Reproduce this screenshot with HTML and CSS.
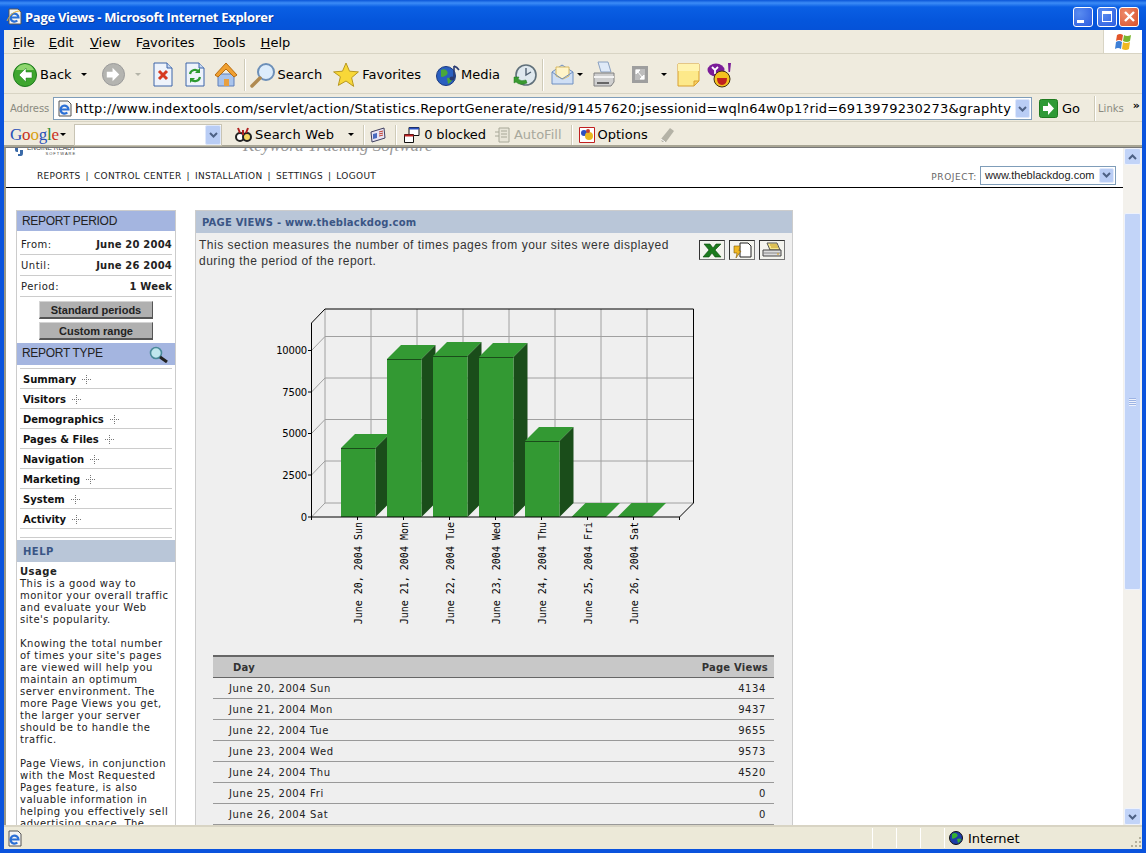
FILE: index.html
```html
<!DOCTYPE html>
<html>
<head>
    <title>Page Views - Microsoft Internet Explorer</title>
    <link rel="stylesheet" href="styles.css">
</head>
<body>
<div class="window">
    <div class="titlebar">
        <svg class="title-icon" width="17" height="17" viewBox="0 0 17 17"><path d="M3 1h9l3 3v12H3z" fill="#f4f4f4" stroke="#555"/><path d="M4.500 9.500h8a4 4 0 1 0-1.200 3" fill="none" stroke="#2a6fd6" stroke-width="2.200"/><path d="M1 13C4 6 9 3 14 3" fill="none" stroke="#e8b030" stroke-width="1"/></svg>
        <span class="title-text">Page Views - Microsoft Internet Explorer</span>
        <div class="win-buttons">
            <div class="win-btn win-btn-min"><span class="glyph-min"></span></div>
            <div class="win-btn"><span class="glyph-max"></span></div>
            <div class="win-btn win-close">
                <svg width="13" height="13" viewBox="0 0 13 13"><path d="M2 2l9 9M11 2l-9 9" stroke="#fff" stroke-width="2.4"/></svg>
            </div>
        </div>
    </div>

    <div class="menubar">
        <span class="menu-item m-file"><u>F</u>ile</span>
        <span class="menu-item m-edit"><u>E</u>dit</span>
        <span class="menu-item m-view"><u>V</u>iew</span>
        <span class="menu-item m-fav">F<u>a</u>vorites</span>
        <span class="menu-item m-tools"><u>T</u>ools</span>
        <span class="menu-item m-help"><u>H</u>elp</span>
        <div class="flag-box">
            <svg width="20" height="20" viewBox="0 0 20 20"><path d="M4 3q3-2 6 0l-1 6q-3-2-6 0z" fill="#e2552a"/><path d="M11 3q3 2 7 0l-1 6q-3 2-7 0z" fill="#7ab52e"/><path d="M3 10q3-2 6 0l-1 7q-3-2-6 0z" fill="#3c7fd6"/><path d="M10 10q3 2 7 0l-1 7q-3 2-7 0z" fill="#f0b820"/></svg>
        </div>
    </div>

    <div class="toolbar">
        <svg class="t-back" width="24" height="24" viewBox="0 0 24 24"><circle cx="12" cy="12" r="11.5" fill="#3fa62f" stroke="#1f7a1f"/><path d="M12 1a11 9 0 0 1 9 6H3a11 9 0 0 1 9-6z" fill="#8fd66f"/><path d="M13 5l-7 7 7 7v-4h6V9h-6z" fill="#fff" stroke="#1f7a1f" stroke-width=".5"/></svg>
        <span class="tool-text t-back-text">Back</span>
        <span class="arrow t-back-arrow"></span>
        <svg class="t-forward" width="23" height="23" viewBox="0 0 24 24"><circle cx="12" cy="12" r="11.5" fill="#b4b4b0" stroke="#999"/><path d="M11 5l7 7-7 7v-4H5V9h6z" fill="#fff"/></svg>
        <span class="arrow arrow-off t-forward-arrow"></span>
        <svg class="t-stop" width="20" height="25" viewBox="0 0 20 25"><path d="M1 1h13l5 5v18H1z" fill="#eef3fb" stroke="#3d65a8"/><path d="M14 1v5h5" fill="#c5d5ee" stroke="#3d65a8"/><path d="M6 9l8 8M14 9l-8 8" stroke="#d63a20" stroke-width="3"/></svg>
        <svg class="t-refresh" width="20" height="25" viewBox="0 0 20 25"><path d="M1 1h13l5 5v18H1z" fill="#eef3fb" stroke="#3d65a8"/><path d="M14 1v5h5" fill="#c5d5ee" stroke="#3d65a8"/><path d="M5 12a5 5 0 0 1 9-2" fill="none" stroke="#2c9a30" stroke-width="2.2"/><path d="M15 6v5h-5z" fill="#2c9a30"/><path d="M15 15a5 5 0 0 1-9 2" fill="none" stroke="#2c9a30" stroke-width="2.2"/><path d="M5 21v-5h5z" fill="#2c9a30"/></svg>
        <svg class="t-home" width="24" height="25" viewBox="0 0 24 25"><path d="M4 12v12h16V12z" fill="#a9c4ec" stroke="#5e7fb8"/><path d="M10 17h5v7h-5z" fill="#e8a040"/><path d="M1 13L12 1l11 12-3 2-8-8-8 8z" fill="#f0a030" stroke="#b86c10"/></svg>
        <span class="sep t-sep1"></span>
        <svg class="t-search" width="26" height="26" viewBox="0 0 26 26"><circle cx="16" cy="10" r="8" fill="#dcecfb" stroke="#6c8fb8" stroke-width="2"/><path d="M10 16l-8 8" stroke="#b08a50" stroke-width="3.5" stroke-linecap="round"/></svg>
        <span class="tool-text t-search-text">Search</span>
        <svg class="t-star" width="26" height="26" viewBox="0 0 26 26"><path d="M13 1l3.500 8.200 8.900.7-6.800 5.800 2.100 8.700L13 19l-7.700 4.400 2.100-8.700L.6 9.900l8.900-.7z" fill="#f8d838" stroke="#b89820"/></svg>
        <span class="tool-text t-star-text">Favorites</span>
        <svg class="t-media" width="24" height="24" viewBox="0 0 24 24"><circle cx="10" cy="13" r="9.500" fill="#2a5fc0" stroke="#1a3a80"/><path d="M5 7q4-2 6 1t-2 5-4 0zM11 15q4-1 5 1t-4 5z" fill="#4aa83a"/><path d="M18 3v12" stroke="#2a3a70" stroke-width="1.600"/><path d="M18 3q3 1 5 4" fill="none" stroke="#2a3a70" stroke-width="1.600"/><ellipse cx="16" cy="15.500" rx="2.500" ry="2" fill="#2a3a70"/></svg>
        <span class="tool-text t-media-text">Media</span>
        <svg class="t-history" width="24" height="24" viewBox="0 0 24 24"><circle cx="13" cy="12" r="10" fill="#dfe8ee" stroke="#60707a" stroke-width="1.600"/><path d="M13 5v7l5-3" fill="none" stroke="#506070" stroke-width="1.400"/><path d="M1 14h5l-1 2q3 3 8 1l1 3q-7 3-11-1l-2 1z" fill="#3a9a30" stroke="#1f7a1f" stroke-width=".5"/></svg>
        <span class="sep t-sep2"></span>
        <svg class="t-mail" width="23" height="23" viewBox="0 0 23 23"><path d="M1 9l10-7 11 7v12H1z" fill="#cfdff5" stroke="#6f8fc0"/><path d="M5 4h13v9l-6 3-7-3z" fill="#fff4c8" stroke="#d8b860"/><path d="M1 9l10 7 11-7" fill="none" stroke="#6f8fc0"/></svg>
        <span class="arrow t-mail-arrow"></span>
        <svg class="t-print" width="24" height="27" viewBox="0 0 24 27"><path d="M6 1h10l3 10H9z" fill="#dfeaf8" stroke="#8aa0c0"/><path d="M2 12h20v9l-3 4H2z" fill="#cfcfcf" stroke="#808080"/><path d="M2 16h20" stroke="#f2f2f2" stroke-width="2"/><path d="M5 22h12" stroke="#666" stroke-width="2"/></svg>
        <svg class="t-resize" width="16" height="17" viewBox="0 0 16 17"><path d="M0 0h16v17H0z" fill="#9e9e9e"/><path d="M3 3h10v11H3z" fill="#bdbdbd"/><path d="M4 4h4L4 8zM12 13H8l4-4zM5 5l6 7" fill="#fff" stroke="#fff"/></svg>
        <span class="arrow t-resize-arrow"></span>
        <svg class="t-note" width="23" height="24" viewBox="0 0 23 24"><path d="M1 1h21v17l-5 5H1z" fill="#fde98a" stroke="#d8a030"/><path d="M1 1h21v7H1z" fill="#fff3b0"/><path d="M17 23v-5h5z" fill="#f8d060" stroke="#d8a030"/></svg>
        <svg class="t-yahoo" width="26" height="26" viewBox="0 0 26 26"><ellipse cx="9" cy="8" rx="8.500" ry="6.500" fill="#7b1c98"/><path d="M5 5l3 3 3-3M8 8v4" fill="none" stroke="#fff" stroke-width="1.800"/><path d="M21 1h3l-1 9h-1.500z" fill="#7b1c98"/><circle cx="15" cy="17" r="8" fill="#f4c020" stroke="#403010"/><path d="M10 16h10q0 7-5 7t-5-7z" fill="#c02020"/></svg>
    </div>

    <div class="addressbar">
        <span class="addr-label">Address</span>
        <div class="addr-field">
            <svg width="17" height="17" viewBox="0 0 17 17"><path d="M3 1h9l3 3v12H3z" fill="#f4f4f4" stroke="#555"/><path d="M4.500 9.500h8a4 4 0 1 0-1.200 3" fill="none" stroke="#2a6fd6" stroke-width="2.200"/></svg>
            <span class="addr-url">http://www.indextools.com/servlet/action/Statistics.ReportGenerate/resid/91457620;jsessionid=wqln64w0p1?rid=6913979230273&amp;graphty</span>
            <span class="combo-btn"><svg width="9" height="6" viewBox="0 0 9 6"><path d="M1 1l3.500 3.500L8 1" fill="none" stroke="#4d6185" stroke-width="2"/></svg></span>
        </div>
        <svg class="go-icon" width="19" height="19" viewBox="0 0 19 19"><rect x=".5" y=".5" width="18" height="18" rx="2" fill="#2f9a36" stroke="#1f7a1f"/><path d="M9 3l6 6.500-6 6.500v-4H4V7h5z" fill="#fff"/></svg>
        <span class="tool-text go-text">Go</span>
        <span class="links-sep"></span>
        <span class="links-text">Links</span>
        <span class="links-more">&raquo;</span>
    </div>

    <div class="googlebar">
        <span class="g-logo"><span class="g-b">G</span><span class="g-r">o</span><span class="g-y">o</span><span class="g-b">g</span><span class="g-g">l</span><span class="g-r">e</span></span>
        <span class="arrow g-logo-arrow"></span>
        <div class="g-input"><span class="combo-btn combo-tall"><svg width="9" height="6" viewBox="0 0 9 6"><path d="M1 1l3.500 3.500L8 1" fill="none" stroke="#4d6185" stroke-width="2"/></svg></span></div>
        <svg class="g-binoc" width="17" height="17" viewBox="0 0 17 17"><circle cx="5" cy="11" r="4" fill="#fff" stroke="#222" stroke-width="2"/><circle cx="12" cy="11" r="4" fill="#f8d860" stroke="#222" stroke-width="2"/><path d="M3 2l2 5M8 4v5M13 2l-2 5" stroke="#b02020" stroke-width="2"/></svg>
        <span class="tool-text g-search">Search Web</span>
        <span class="arrow g-search-arrow"></span>
        <span class="sep-short g-sep1"></span>
        <svg class="g-news" width="16" height="16" viewBox="0 0 16 16"><path d="M1 5l13-4 1 10-13 4z" fill="#e8e4f4" stroke="#404060"/><path d="M3 7l4-1v5l-4 1z" fill="#4a6ac0"/><path d="M9 5l4-1M9 7l4-1M9 9l4-1" stroke="#c04030"/></svg>
        <span class="sep-short g-sep2"></span>
        <svg class="g-popup" width="16" height="16" viewBox="0 0 16 16"><path d="M5 .5h10v8H5z" fill="#fff" stroke="#111"/><path d="M5 .5h10v2H5z" fill="#2a50c0"/><path d="M.5 7.500h9v8h-9z" fill="#fff" stroke="#111"/><path d="M.5 7.500h9v2h-9z" fill="#c02020"/></svg>
        <span class="tool-text g-blocked">0 blocked</span>
        <svg class="g-fill" width="16" height="16" viewBox="0 0 16 16"><path d="M4 1h10v14H4z" fill="#e8e5d8" stroke="#a8a898"/><path d="M0 5h4M0 9h4M6 4h6M6 7h6M6 10h6" stroke="#a8a898"/></svg>
        <span class="tool-text g-autofill">AutoFill</span>
        <span class="sep-short g-sep3"></span>
        <svg class="g-options" width="16" height="16" viewBox="0 0 16 16"><path d="M.5.5h15v15H.5z" fill="#fff" stroke="#c02020"/><circle cx="5" cy="6" r="3" fill="#2a50c0"/><circle cx="10" cy="9" r="4" fill="#e8b820"/><circle cx="9" cy="4" r="2" fill="#c04030"/></svg>
        <span class="tool-text g-options-text">Options</span>
        <svg class="g-eraser" width="15" height="16" viewBox="0 0 15 16"><path d="M1 12L10 1l4 3-8 11H2z" fill="#b4b2a6"/><path d="M1 12l4 3" stroke="#fff"/></svg>
    </div>

    <div class="page-area">
        <div class="page">
            <div class="site-head">
                <div class="logo-row">
                    <div class="logo">
                        <svg width="10" height="16" viewBox="0 0 10 16"><path d="M8 1H3Q1 1 1 4v4q0 2 2 2h1V4h4z" fill="#3a6aa8"/><path d="M4 14h3q2 0 2-3V8H6v4H4z" fill="#3a6aa8"/></svg>
                        <div class="logo-text">ENGINE READY<small>SOFTWARE</small></div>
                    </div>
                    <span class="tagline">Keyword Tracking Software</span>
                </div>
                <div class="nav-row">
                    <div class="site-nav">REPORTS<i>|</i>CONTROL CENTER<i>|</i>INSTALLATION<i>|</i>SETTINGS<i>|</i>LOGOUT</div>
                    <div class="project">
                        <span class="project-label">PROJECT:</span>
                        <div class="project-select">www.theblackdog.com<span class="combo-btn combo-small"><svg width="9" height="6" viewBox="0 0 9 6"><path d="M1 1l3.500 3.500L8 1" fill="none" stroke="#4d6185" stroke-width="2"/></svg></span></div>
                    </div>
                </div>
            </div>

            <div class="columns">
                <div class="sidebar">
                    <div class="side-head">REPORT PERIOD</div>
                    <div class="period-rows">
                        <div class="period-row"><span>From:</span><b>June 20 2004</b></div>
                        <div class="period-row"><span>Until:</span><b>June 26 2004</b></div>
                        <div class="period-row"><span>Period:</span><b>1 Week</b></div>
                    </div>
                    <div class="side-btn side-btn-first">Standard periods</div>
                    <div class="side-btn">Custom range</div>
                    <div class="side-head side-head-type">REPORT TYPE
                        <svg width="20" height="17" viewBox="0 0 20 17"><circle cx="7" cy="7" r="5.500" fill="#bfe6ee" stroke="#4a8a9a" stroke-width="1.600"/><path d="M11 11l7 5" stroke="#222" stroke-width="3"/></svg>
                    </div>
                    <ul class="type-list">
                        <li>Summary<span class="plus"></span></li>
                        <li>Visitors<span class="plus"></span></li>
                        <li>Demographics<span class="plus"></span></li>
                        <li>Pages &amp; Files<span class="plus"></span></li>
                        <li>Navigation<span class="plus"></span></li>
                        <li>Marketing<span class="plus"></span></li>
                        <li>System<span class="plus"></span></li>
                        <li>Activity<span class="plus"></span></li>
                    </ul>
                    <div class="type-end"></div>
                    <div class="help-head">HELP</div>
                    <div class="help-body">
                        <b>Usage</b><br>
                        This is a good way to<br>
                        monitor your overall traffic<br>
                        and evaluate your Web<br>
                        site's popularity.<br>
                        <br>
                        Knowing the total number<br>
                        of times your site's pages<br>
                        are viewed will help you<br>
                        maintain an optimum<br>
                        server environment. The<br>
                        more Page Views you get,<br>
                        the larger your server<br>
                        should be to handle the<br>
                        traffic.<br>
                        <br>
                        Page Views, in conjunction<br>
                        with the Most Requested<br>
                        Pages feature, is also<br>
                        valuable information in<br>
                        helping you effectively sell<br>
                        advertising space. The
                    </div>
                </div>

                <div class="report">
                    <div class="report-head">PAGE VIEWS - www.theblackdog.com</div>
                    <div class="report-intro">
                        <p>This section measures the number of times pages from your sites were displayed during the period of the report.</p>
                        <div class="export-btns">
                            <span class="export-btn"><svg width="20" height="15" viewBox="0 0 20 15"><path d="M2 1h6l3 4 3-4h5l-6 6 6 7h-6l-3-4-3 4H1l6-7z" fill="#1c7a1c" stroke="#0c4a0c" stroke-width=".6"/></svg></span>
                            <span class="export-btn"><svg width="20" height="16" viewBox="0 0 20 16"><path d="M8 1h8l3 3v11H8z" fill="#fff" stroke="#222"/><path d="M2 4h6l-1 5h2l-5 7 1-5H2z" fill="#f0b820" stroke="#805c08" stroke-width=".6"/></svg></span>
                            <span class="export-btn"><svg width="22" height="16" viewBox="0 0 22 16"><path d="M6 1h10l3 7H9z" fill="#f6e68a" stroke="#555"/><path d="M9 3h7M10 5h7" stroke="#c09820"/><path d="M2 8h18v6H2z" fill="#ddd" stroke="#444"/><path d="M2 11h18" stroke="#888"/><path d="M16 12h2" stroke="#d8a020"/></svg></span>
                        </div>
                    </div>

                    <svg class="chart" width="450" height="330" viewBox="260 300 450 330">
                        <g class="grid">
                            <path d="M325 309V503M371 309V503M417 309V503M463 309V503M509 309V503M555 309V503M601 309V503M647 309V503"/>
                            <path d="M325 336.500H693M325 378H693M325 419.500H693M325 461H693M325 503H693"/>
                            <path d="M311.500 350.500L325 336.500M311.500 392L325 378M311.500 433.500L325 419.500M311.500 475L325 461M311.500 517L325 503"/>
                        </g>
                        <g class="bar">
                            <path class="bar-top" d="M341 448l14-14h34.500l-14 14z"/><path class="bar-side" d="M375.500 448l14-14v69l-14 14z"/><path class="bar-front" d="M341 448h34.500v69H341z"/><path class="bar-line" d="M341 448.500h34.500"/>
                            <path class="bar-top" d="M387 359l14-14h34.500l-14 14z"/><path class="bar-side" d="M421.500 359l14-14v158l-14 14z"/><path class="bar-front" d="M387 359h34.500v158H387z"/><path class="bar-line" d="M387 359.500h34.500"/>
                            <path class="bar-top" d="M433 356l14-14h34.500l-14 14z"/><path class="bar-side" d="M467.500 356l14-14v161l-14 14z"/><path class="bar-front" d="M433 356h34.500v161H433z"/><path class="bar-line" d="M433 356.500h34.500"/>
                            <path class="bar-top" d="M479 357l14-14h34.500l-14 14z"/><path class="bar-side" d="M513.500 357l14-14v160l-14 14z"/><path class="bar-front" d="M479 357h34.500v160H479z"/><path class="bar-line" d="M479 357.500h34.500"/>
                            <path class="bar-top" d="M525 441l14-14h34.500l-14 14z"/><path class="bar-side" d="M559.500 441l14-14v76l-14 14z"/><path class="bar-front" d="M525 441h34.500v76H525z"/><path class="bar-line" d="M525 441.500h34.500"/>
                            <path class="bar-top" d="M571.500 517l14-14h34.500l-14 14z"/>
                            <path class="bar-top" d="M617.500 517l14-14h34.500l-14 14z"/>
                        </g>
                        <g class="axes">
                            <path d="M311.500 517V323L325 309H693.500V503L679.500 517H311.500"/>
                            <path d="M308 350.500h3.500M308 392h3.500M308 433.500h3.500M308 475h3.500M308 517h3.500M311.500 517v3M357.500 517v3M403.500 517v3M449.500 517v3M495.500 517v3M541.500 517v3M587.500 517v3M633.500 517v3M679.500 517v3"/>
                        </g>
                        <g class="ticks">
                            <text x="307" y="354">10000</text>
                            <text x="307" y="396">7500</text>
                            <text x="307" y="437">5000</text>
                            <text x="307" y="479">2500</text>
                            <text x="307" y="521">0</text>
                        </g>
                        <g class="days">
                            <text transform="rotate(-90 362 522)" x="362" y="522">June 20, 2004 Sun</text>
                            <text transform="rotate(-90 408 522)" x="408" y="522">June 21, 2004 Mon</text>
                            <text transform="rotate(-90 454 522)" x="454" y="522">June 22, 2004 Tue</text>
                            <text transform="rotate(-90 500 522)" x="500" y="522">June 23, 2004 Wed</text>
                            <text transform="rotate(-90 546 522)" x="546" y="522">June 24, 2004 Thu</text>
                            <text transform="rotate(-90 592 522)" x="592" y="522">June 25, 2004 Fri</text>
                            <text transform="rotate(-90 638 522)" x="638" y="522">June 26, 2004 Sat</text>
                        </g>
                    </svg>

                    <table class="views">
                        <thead><tr><th class="day-head">Day</th><th class="num-head">Page Views</th></tr></thead>
                        <tbody>
                            <tr><td>June 20, 2004 Sun</td><td class="num">4134</td></tr>
                            <tr><td>June 21, 2004 Mon</td><td class="num">9437</td></tr>
                            <tr><td>June 22, 2004 Tue</td><td class="num">9655</td></tr>
                            <tr><td>June 23, 2004 Wed</td><td class="num">9573</td></tr>
                            <tr><td>June 24, 2004 Thu</td><td class="num">4520</td></tr>
                            <tr><td>June 25, 2004 Fri</td><td class="num">0</td></tr>
                            <tr><td>June 26, 2004 Sat</td><td class="num">0</td></tr>
                        </tbody>
                    </table>
                </div>
            </div>
        </div>

        <div class="scrollbar">
            <div class="scroll-btn"><svg width="9" height="6" viewBox="0 0 9 6"><path d="M1 5l3.500-3.500L8 5" fill="none" stroke="#4d6185" stroke-width="2"/></svg></div>
            <div class="scroll-gap-top"></div>
            <div class="scroll-thumb"><span class="thumb-grip"></span></div>
            <div class="scroll-gap-bottom"></div>
            <div class="scroll-btn"><svg width="9" height="6" viewBox="0 0 9 6"><path d="M1 1l3.500 3.500L8 1" fill="none" stroke="#4d6185" stroke-width="2"/></svg></div>
        </div>
    </div>

    <div class="statusbar">
        <svg class="status-ie" width="17" height="17" viewBox="0 0 17 17"><path d="M3 1h9l3 3v12H3z" fill="#f4f4f4" stroke="#555"/><path d="M4.500 9.500h8a4 4 0 1 0-1.200 3" fill="none" stroke="#2a6fd6" stroke-width="2.200"/></svg>
        <span class="status-cell status-cell-first"></span>
        <span class="status-cell"></span>
        <span class="status-cell"></span>
        <span class="status-cell status-last"></span>
        <svg class="status-globe" width="14" height="14" viewBox="0 0 14 14"><circle cx="7" cy="7" r="6.500" fill="#1c3ca8" stroke="#111"/><path d="M3 3q3-2 5 0t-2 4-3-1zM8 8q3-1 4 0t-3 4z" fill="#35b030"/></svg>
        <span class="status-zone">Internet</span>
        <svg class="status-grip" width="12" height="12" viewBox="0 0 12 12"><path d="M9 1h2v2H9zM5 5h2v2H5zM9 5h2v2H9zM1 9h2v2H1zM5 9h2v2H5zM9 9h2v2H9z" fill="#b4b09c"/></svg>
    </div>
</div>
</body>
</html>
```

FILE: styles.css
```css
html, body {
    margin: 0;
    padding: 0;
    height: 100%;
    overflow: hidden;
    background: #0a53dd;
}

.window {
    width: 1146px;
    height: 853px;
    display: flex;
    flex-direction: column;
    box-sizing: border-box;
    padding: 0 4px 4px;
    background: #0a53dd;
    font-family: "DejaVu Sans", sans-serif;
    color: #000;
}

/* title bar */
.titlebar {
    height: 30px;
    box-sizing: border-box;
    margin: 0 -4px;
    padding: 4px 7px 0 6px;
    display: flex;
    align-items: center;
    flex: none;
    background: linear-gradient(#0a55d8 0, #3c8cf6 3px, #0a5fe4 7px, #0556dc 20px, #0552d8 30px);
}

.title-icon {
    margin-right: 2px;
    margin-top: -2px;
}

.title-text {
    color: #fff;
    font: bold 13px "Open Sans", sans-serif;
    letter-spacing: -.3px;
    text-shadow: 1px 1px 0 #0a3a9c;
}

.win-buttons {
    margin-left: auto;
    display: flex;
    gap: 2px;
    margin-top: -1px;
}

.win-btn {
    width: 20px;
    height: 20px;
    box-sizing: border-box;
    border: 1px solid #fff;
    border-radius: 3px;
    background: radial-gradient(circle at 30% 30%, #5a8cf0, #2a5ce0);
    display: flex;
    align-items: center;
    justify-content: center;
}

.win-btn-min { margin-right: 2px; }

.win-close {
    background: radial-gradient(circle at 30% 30%, #ee8a6a, #d8502a);
}

.glyph-min {
    width: 7px;
    height: 3px;
    background: #fff;
    margin: 9px 6px 0 0;
}

.glyph-max {
    width: 8px;
    height: 7px;
    border: 1px solid #fff;
    border-top-width: 3px;
}

/* menu */
.menubar {
    height: 24px;
    flex: none;
    display: flex;
    align-items: center;
    box-sizing: border-box;
    padding-top: 2px;
    background: #efebde;
    border-bottom: 1px solid #d8d4c4;
    font-size: 13px;
}

.menu-item { white-space: nowrap; }
.m-file { margin-left: 9px; }
.m-edit { margin-left: 14px; }
.m-view { margin-left: 16px; }
.m-fav { margin-left: 15px; }
.m-tools { margin-left: 19px; }
.m-help { margin-left: 15px; }

.flag-box {
    margin-left: auto;
    margin-top: -2px;
    width: 39px;
    height: 23px;
    background: #fff;
    border-left: 1px solid #d8d4c4;
    box-sizing: border-box;
    display: flex;
    align-items: center;
    justify-content: center;
}

/* main toolbar */
.toolbar {
    height: 40px;
    flex: none;
    display: flex;
    align-items: center;
    box-sizing: border-box;
    padding-top: 2px;
    background: #efebde;
    border-bottom: 1px solid #d8d4c4;
}

.toolbar svg { flex: none; }

.tool-text {
    font-size: 13px;
    white-space: nowrap;
}

.arrow {
    flex: none;
    width: 0;
    height: 0;
    border-left: 3px solid transparent;
    border-right: 3px solid transparent;
    border-top: 3px solid #000;
}

.arrow-off { border-top-color: #b4b4a8; }

.sep {
    flex: none;
    width: 1px;
    height: 32px;
    background: #cfcbb8;
    border-right: 1px solid #fff;
}

.t-back { margin-left: 9px; }
.t-back-text { margin-left: 3px; }
.t-back-arrow { margin-left: 9px; }
.t-forward { margin-left: 15px; }
.t-forward-arrow { margin-left: 10px; }
.t-stop { margin-left: 12px; }
.t-refresh { margin-left: 12px; }
.t-home { margin-left: 9px; }
.t-sep1 { margin-left: 6px; }
.t-search { margin-left: 4px; }
.t-search-text { margin-left: 2px; }
.t-star { margin-left: 11px; }
.t-star-text { margin-left: 3px; }
.t-media { margin-left: 15px; }
.t-media-text { margin-left: 1px; }
.t-history { margin-left: 13px; }
.t-sep2 { margin-left: 5px; }
.t-mail { margin-left: 7px; }
.t-mail-arrow { margin-left: 3px; }
.t-print { margin-left: 9px; }
.t-resize { margin-left: 16px; }
.t-resize-arrow { margin-left: 13px; }
.t-note { margin-left: 10px; }
.t-yahoo { margin-left: 7px; }

/* address bar */
.addressbar {
    height: 28px;
    flex: none;
    display: flex;
    align-items: center;
    box-sizing: border-box;
    padding-top: 2px;
    background: #efebde;
    border-bottom: 1px solid #d8d4c4;
}

.addr-label {
    margin-left: 6px;
    width: 43px;
    flex: none;
    font-size: 10px;
    letter-spacing: -.1px;
    color: #8a8a80;
}

.addr-field {
    width: 979px;
    height: 23px;
    flex: none;
    box-sizing: border-box;
    border: 1px solid #7f9db9;
    background: #fff;
    display: flex;
    align-items: center;
    padding-left: 2px;
    overflow: hidden;
}

.addr-field svg { flex: none; }

.addr-url {
    font-size: 13px;
    margin-left: 2px;
    white-space: nowrap;
    overflow: hidden;
    flex: 1;
    letter-spacing: .2px;
}

.combo-btn {
    flex: none;
    width: 15px;
    height: 19px;
    margin: 0 1px;
    border-radius: 2px;
    background: #b9cdf5;
    border: 1px solid #dfe8fb;
    box-sizing: border-box;
    display: flex;
    align-items: center;
    justify-content: center;
}

.go-icon { margin-left: 7px; flex: none; }
.go-text { margin-left: 4px; }

.links-sep {
    width: 1px;
    height: 25px;
    margin-left: 14px;
    background: #cfcbb8;
    border-right: 1px solid #fff;
}

.links-text {
    margin-left: 2px;
    font-size: 10px;
    color: #8a8a80;
}

.links-more {
    margin-left: 9px;
    margin-top: -6px;
    font-size: 11px;
    font-weight: bold;
}

/* google bar */
.googlebar {
    height: 25px;
    flex: none;
    display: flex;
    align-items: center;
    box-sizing: border-box;
    padding-top: 2px;
    background: #efebde;
    border-bottom: 2px solid #a8a594;
}

.googlebar svg { flex: none; }

.g-logo {
    margin-left: 6px;
    font: 17px "Liberation Serif", serif;
    letter-spacing: -.2px;
    width: 50px;
}

.g-b { color: #2a50b8; }
.g-r { color: #c8301c; }
.g-y { color: #d8a010; }
.g-g { color: #2c8a30; }

.g-logo-arrow { margin-left: 0; }

.g-input {
    margin-left: 8px;
    width: 148px;
    height: 22px;
    flex: none;
    box-sizing: border-box;
    background: #fff;
    border: 1px solid #c8c4b4;
    display: flex;
    justify-content: flex-end;
}

.combo-tall {
    height: 20px;
    margin: 0;
    width: 16px;
}

.g-binoc { margin-left: 13px; }
.g-search { margin-left: 3px; letter-spacing: .2px; }
.g-search-arrow { margin-left: 14px; }

.sep-short {
    flex: none;
    width: 1px;
    height: 20px;
    background: #cfcbb8;
    border-right: 1px solid #fff;
}

.g-sep1 { margin-left: 9px; }
.g-news { margin-left: 5px; }
.g-sep2 { margin-left: 9px; }
.g-popup { margin-left: 7px; }
.g-blocked { margin-left: 4px; letter-spacing: -.1px; }
.g-fill { margin-left: 9px; }
.g-autofill { margin-left: 3px; color: #a8a89c; }
.g-sep3 { margin-left: 9px; }
.g-options { margin-left: 6px; }
.g-options-text { margin-left: 3px; }
.g-eraser { margin-left: 12px; }

/* page */
.page-area {
    flex: 1;
    min-height: 0;
    display: flex;
    border-left: 2px solid #9a9788;
    border-top: 1px solid #777;
}

.page {
    flex: 1;
    min-width: 0;
    overflow: hidden;
    background: #fff;
    font-size: 10px;
    letter-spacing: .5px;
    color: #222;
}

.site-head {
    height: 39px;
    border-bottom: 1px solid #000;
    display: flex;
    flex-direction: column;
}

.logo-row {
    height: 15px;
    margin-top: -6px;
    flex: none;
    display: flex;
    align-items: flex-start;
    padding-left: 8px;
}

.logo {
    display: flex;
    align-items: flex-start;
    width: 229px;
    flex: none;
}

.logo-text {
    margin-left: 3px;
    font: 6.500px "Liberation Sans", sans-serif;
    line-height: 6px;
    padding-top: 3px;
    color: #444;
    letter-spacing: 0;
}

.logo-text small {
    display: block;
    text-align: right;
    font-size: 4px;
    letter-spacing: 1px;
}

.tagline {
    font: italic 17px "Liberation Serif", serif;
    color: #999;
    letter-spacing: 0;
    margin-top: -6px;
}

.nav-row {
    flex: 1;
    display: flex;
    align-items: center;
    justify-content: space-between;
    padding: 0 7px 0 31px;
}

.site-nav {
    font: 9px "DejaVu Sans", sans-serif;
    letter-spacing: .33px;
    margin-top: 8px;
}

.site-nav i {
    font-style: normal;
    margin: 0 5px;
}

.project {
    display: flex;
    align-items: center;
    margin-top: 6px;
}

.project-label {
    font: 9px "DejaVu Sans", sans-serif;
    letter-spacing: .6px;
    color: #666;
    margin-right: 3px;
    margin-top: 3px;
}

.project-select {
    width: 136px;
    height: 19px;
    box-sizing: border-box;
    border: 1px solid #7f9db9;
    display: flex;
    align-items: center;
    justify-content: space-between;
    padding-left: 4px;
    font: 11px "Liberation Sans", sans-serif;
    letter-spacing: 0;
}

.combo-small {
    height: 15px;
    width: 15px;
}

.columns {
    display: flex;
    align-items: flex-start;
    padding: 22px 0 0 10px;
}

/* left column */
.sidebar {
    width: 160px;
    flex: none;
    box-sizing: border-box;
    border: 1px solid #cccccc;
    border-bottom: 0;
}

.side-head {
    height: 20px;
    background: #a4b5e0;
    font: 12px/20px "Liberation Sans", sans-serif;
    letter-spacing: -.3px;
    color: #222;
    padding-left: 5px;
}

.side-head-type {
    height: 22px;
    margin-top: 3px;
    line-height: 20px;
    display: flex;
    justify-content: space-between;
    padding-right: 6px;
}

.side-head-type svg { margin-top: 3px; }

.period-rows {
    margin: 3px 3px 0;
}

.period-row {
    height: 21px;
    box-sizing: border-box;
    border-bottom: 1px solid #ccc;
    display: flex;
    justify-content: space-between;
    align-items: center;
    padding: 1px 0 0 1px;
    font-size: 10px;
}

.period-row b { letter-spacing: .2px; }

.side-btn {
    width: 114px;
    height: 18px;
    margin: 3px auto 0;
    box-sizing: border-box;
    background: #b0b0b0;
    border-top: 1px solid #d4d4d4;
    border-left: 1px solid #d4d4d4;
    border-right: 1px solid #555;
    border-bottom: 2px solid #555;
    text-align: center;
    font: bold 11px/16px "Liberation Sans", sans-serif;
    letter-spacing: 0;
    color: #222;
}

.side-btn-first { margin-top: 4px; }

.type-list {
    list-style: none;
    margin: 3px 3px 0;
    padding: 0;
    border-top: 1px solid #ccc;
}

.type-list li {
    height: 20px;
    box-sizing: border-box;
    border-bottom: 1px solid #ccc;
    font-weight: bold;
    font-size: 10px;
    letter-spacing: 0;
    padding: 2px 0 0 3px;
    color: #111;
    display: flex;
    align-items: center;
}

.plus {
    width: 9px;
    height: 9px;
    margin-left: 6px;
    background:
        repeating-linear-gradient(90deg, #777 0 1px, transparent 1px 2px) center / 9px 1px no-repeat,
        repeating-linear-gradient(0deg, #777 0 1px, transparent 1px 2px) center / 1px 9px no-repeat;
}

.type-end {
    margin: 8px 3px 0;
    border-top: 1px solid #ccc;
}

.help-head {
    height: 22px;
    margin-top: 2px;
    background: #b9c6d8;
    color: #3a5585;
    font: bold 10px/24px "DejaVu Sans", sans-serif;
    letter-spacing: .5px;
    padding-left: 6px;
}

.help-body {
    padding: 4px 3px 0;
    font-size: 10px;
    line-height: 12px;
    color: #222;
}

/* report panel */
.report {
    width: 598px;
    flex: none;
    margin-left: 19px;
    box-sizing: border-box;
    background: #efefef;
    border: 1px solid #cccccc;
    border-top-width: 1px;
}

.report-head {
    height: 22px;
    background: #b9c6d8;
    color: #3a5585;
    font: bold 10px/24px "DejaVu Sans", sans-serif;
    letter-spacing: .2px;
    padding-left: 6px;
}

.report-intro {
    display: flex;
    justify-content: space-between;
    padding: 4px 7px 0 3px;
    height: 36px;
}

.report-intro p {
    margin: 0;
    width: 480px;
    font: 12px/16px "Liberation Sans", sans-serif;
    letter-spacing: .5px;
    color: #333;
}

.export-btns {
    display: flex;
    gap: 4px;
    margin-top: 3px;
}

.export-btn {
    width: 26px;
    height: 20px;
    box-sizing: border-box;
    border: 1px solid #333;
    border-right-color: #777;
    border-bottom-color: #777;
    background: #f4f4ee;
    display: flex;
    align-items: center;
    justify-content: center;
}

.chart {
    display: block;
    margin: 27px 0 0 64px;
}

.grid path {
    fill: none;
    stroke: #a0a0a0;
    stroke-width: 1;
}

.bar-top, .bar-front { fill: #339933; }
.bar-side { fill: #1a4d1a; }
.bar-line { stroke: #1a4d1a; fill: none; }

.axes path {
    fill: none;
    stroke: #000;
    stroke-width: 1;
}

.ticks text {
    font: 10px "DejaVu Sans", sans-serif;
    letter-spacing: -.2px;
    fill: #000;
    text-anchor: end;
}

.days text {
    font: 10px "DejaVu Sans Mono", monospace;
    letter-spacing: 0;
    fill: #000;
    text-anchor: end;
}

.views {
    width: 561px;
    margin: 25px 0 0 17px;
    border-collapse: collapse;
    font-size: 10px;
    letter-spacing: .6px;
    color: #222;
}

.views th {
    height: 20px;
    padding: 0;
    background: #c8c8c8;
    border-top: 2px solid #666;
    border-bottom: 1px solid #666;
    color: #333;
    letter-spacing: .2px;
}

.day-head {
    text-align: left;
    padding-left: 20px !important;
}

.num-head {
    text-align: right;
    padding-right: 6px !important;
}

.views td {
    height: 20px;
    padding: 0 0 0 16px;
    border-bottom: 1px solid #999;
}

.views td.num {
    text-align: right;
    padding: 0 8px 0 0;
}

/* scrollbar */
.scrollbar {
    width: 19px;
    flex: none;
    display: flex;
    flex-direction: column;
    background: #f3f1ec;
}

.scroll-btn {
    height: 17px;
    flex: none;
    box-sizing: border-box;
    margin: 0 1px;
    border: 1px solid #eef2fc;
    border-radius: 2px;
    background: #c2d4f8;
    display: flex;
    align-items: center;
    justify-content: center;
}

.scroll-gap-top { height: 48px; flex: none; }
.scroll-gap-bottom { flex: 1; }

.scroll-thumb {
    height: 377px;
    flex: none;
    box-sizing: border-box;
    margin: 0 1px;
    border: 1px solid #eef2fc;
    border-radius: 2px;
    background: #c2d4f8;
    display: flex;
    align-items: center;
    justify-content: center;
}

.thumb-grip {
    width: 7px;
    height: 8px;
    background: repeating-linear-gradient(0deg, #eef2fc 0 1px, #9db4e4 1px 2px);
}

/* status bar */
.statusbar {
    height: 24px;
    flex: none;
    display: flex;
    align-items: center;
    box-sizing: border-box;
    background: #ece9d8;
    border-top: 2px solid #d8d4c4;
}

.status-ie { margin-left: 2px; flex: none; }

.status-cell {
    width: 24px;
    height: 20px;
    flex: none;
    box-sizing: border-box;
    border-left: 1px solid #fff;
}

.status-cell-first { margin-left: 849px; }
.status-last { width: 5px; }

.status-globe { flex: none; margin-left: 0; }

.status-zone {
    margin-left: 5px;
    font-size: 13px;
}

.status-grip {
    margin-left: auto;
    align-self: flex-end;
    margin-bottom: 1px;
}
```
